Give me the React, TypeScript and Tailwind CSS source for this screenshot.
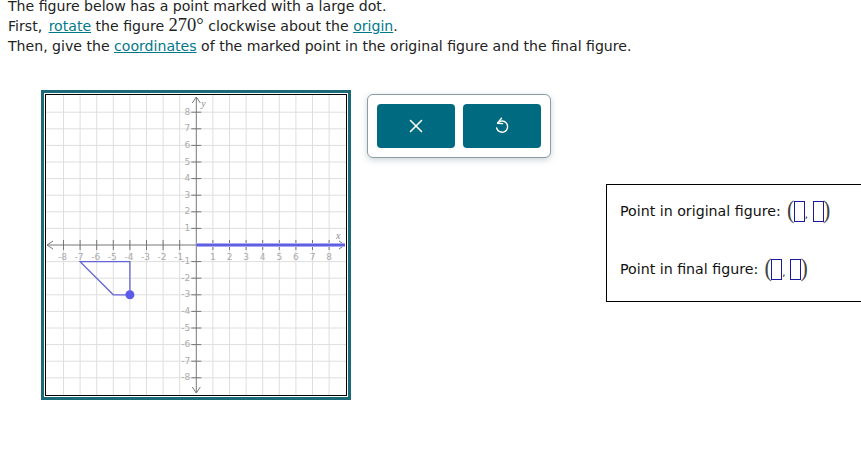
const ticks = [-8, -7, -6, -5, -4, -3, -2, -1, 1, 2, 3, 4, 5, 6, 7, 8];
const step = 16.6;
const ox = 150.3;
const oy = 150;
const px = (v: number) => ox + v * step;
const py = (v: number) => oy - v * step;

function Graph() {
  return (
    <svg width="300" height="300" viewBox="0 0 300 300" className="block">
      {ticks.map((t) => (
        <g key={t} stroke="#dedede" strokeWidth="1">
          <line x1={px(t)} y1="0" x2={px(t)} y2="300" />
          <line x1="0" y1={py(t)} x2="300" y2={py(t)} />
        </g>
      ))}
      <g stroke="#777777" strokeWidth="1" fill="none">
        <line x1="1" y1={oy} x2="299" y2={oy} />
        <line x1={ox} y1="2" x2={ox} y2="298" />
        <path d={`M7 ${oy - 4}L1 ${oy}L7 ${oy + 4}`} />
        <path d={`M${ox - 4} 8L${ox} 2L${ox + 4} 8`} />
        <path d={`M${ox - 4} 292L${ox} 298L${ox + 4} 292`} />
        <path d={`M293 ${oy - 4}L299 ${oy}L293 ${oy + 4}`} />
        {ticks.map((t) => (
          <g key={t}>
            <line x1={px(t)} y1={oy - 5} x2={px(t)} y2={oy + 5} />
            <line x1={ox - 5} y1={py(t)} x2={ox + 5} y2={py(t)} />
          </g>
        ))}
      </g>
      <g fill="#ababab" fontSize="9" fontFamily="'DejaVu Sans', sans-serif">
        {ticks.map((t) => (
          <g key={t}>
            <text x={px(t) + (t < 0 ? -1 : 0)} y={oy + 15} textAnchor="middle">{t}</text>
            <text x={ox - 6} y={py(t) + 2.5} textAnchor="end">{t}</text>
          </g>
        ))}
      </g>
      <g fill="#8a8a8a" fontSize="10" fontStyle="italic" fontFamily="'Liberation Serif', serif">
        <text x={ox + 5} y="12">y</text>
        <text x="290" y={oy - 6}>x</text>
      </g>
      <line x1={ox} y1={oy} x2="299" y2={oy} stroke="#a9a9f5" strokeWidth="4" />
      <line x1={ox} y1={oy} x2="299" y2={oy} stroke="#5f5fe0" strokeWidth="2" />
      <path
        d={`M${px(-4)} ${py(-1)}L${px(-7)} ${py(-1)}L${px(-5)} ${py(-3)}L${px(-4)} ${py(-3)}Z`}
        fill="none"
        stroke="#6565d8"
        strokeWidth="1.3"
      />
      <circle cx={px(-4)} cy={py(-3)} r="4.5" fill="#5b5bea" />
    </svg>
  );
}

function AnswerBox() {
  return <span className="inline-block w-[11px] h-[21px] border border-[#1a1a9c] bg-white" />;
}

function Paren({ char }: { char: string }) {
  return (
    <span className="w-[6px] flex justify-center text-[22px] leading-none text-[#444] -mt-[3px] scale-y-110 font-['Liberation_Serif',serif]">
      {char}
    </span>
  );
}

function PointRow({ label }: { label: string }) {
  return (
    <div className="flex items-center h-[24px] text-[14.2px] text-[#111]">
      <span className="whitespace-nowrap">{label}</span>
      <span className="flex items-center ml-[7px]">
        <Paren char="(" />
        <AnswerBox />
        <span className="w-[8px] text-[10px] leading-none text-left mt-[8px]">,</span>
        <AnswerBox />
        <Paren char=")" />
      </span>
    </div>
  );
}

export default function App() {
  return (
    <div className="w-[861px] h-[457px] overflow-hidden bg-white font-['DejaVu_Sans',sans-serif] text-[14.1px] leading-[20px] text-[#222]">
      <div className="pl-2 -mt-[4px] whitespace-nowrap">
        <p>The figure below has a point marked with a large dot.</p>
        <p>
          First, <a className="ml-[2px] text-[#00788a] underline">rotate</a> the figure{' '}
          <span className="font-['Liberation_Serif',serif] text-[18.5px] leading-none">270°</span> clockwise about the{' '}
          <a className="text-[#00788a] underline">origin</a>.
        </p>
        <p>
          Then, give the <a className="text-[#00788a] underline">coordinates</a> of the marked point in the original
          figure and the final figure.
        </p>
      </div>

      <div className="flex items-start pl-[41px] pt-[34px]">
        <div className="border-[3px] border-[#1a6a78] p-px bg-white shrink-0">
          <div className="border border-black">
            <Graph />
          </div>
        </div>

        <div className="ml-4 mt-[4px] shrink-0">
          <div className="flex gap-2 p-[9px] border border-[#8a9ca6] rounded-md bg-white shadow-[0_2px_6px_rgba(90,110,120,0.3)]">
            <button className="w-[78px] h-[44px] rounded bg-[#006b80] flex items-center justify-center">
              <svg width="16" height="16" viewBox="0 0 16 16" fill="none" stroke="white" strokeWidth="1.6" strokeLinecap="round">
                <path d="M2.5 2.5L13.5 13.5M13.5 2.5L2.5 13.5" />
              </svg>
            </button>
            <button className="w-[78px] h-[44px] rounded bg-[#006b80] flex items-center justify-center">
              <svg width="16" height="18" viewBox="0 0 16 18" fill="none" stroke="white" strokeWidth="1.4" strokeLinecap="round" strokeLinejoin="round">
                <path d="M3.6 6.2A5.6 5.6 0 1 1 2.6 11" />
                <path d="M7.5 1.2L3.6 6.2L8.6 6.6" />
              </svg>
            </button>
          </div>
        </div>

        <div className="ml-[55px] mt-[94px] w-[300px] h-[118px] shrink-0 border border-black bg-white pl-[13px] pt-[14px] flex flex-col gap-[34px]">
          <PointRow label="Point in original figure:" />
          <PointRow label="Point in final figure:" />
        </div>
      </div>
    </div>
  );
}
